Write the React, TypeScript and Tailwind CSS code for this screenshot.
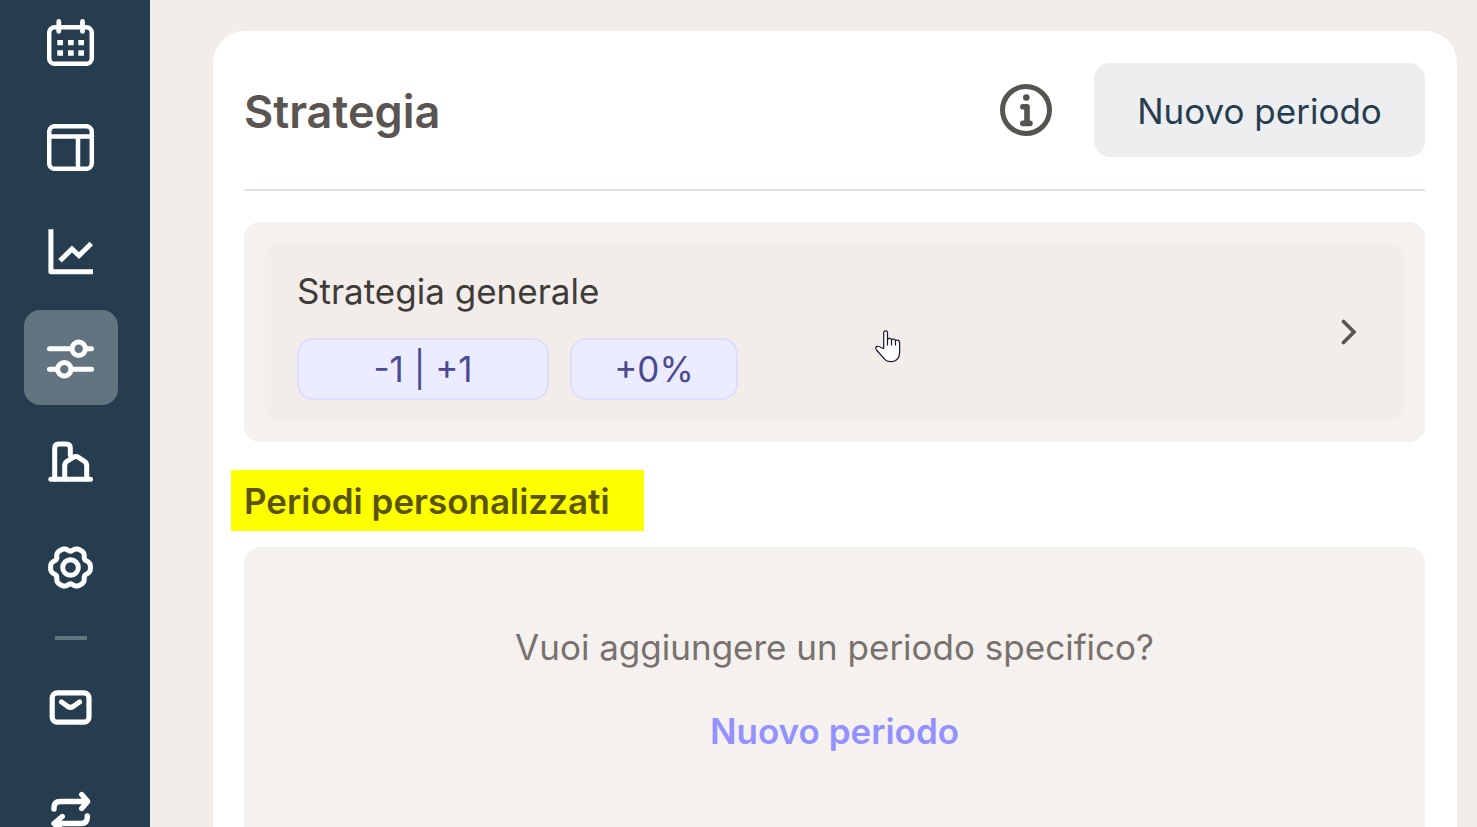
import type { ReactNode } from "react";
import clsx from "clsx";

const CENTER = 23.5;

// six-lobed outline of the settings gear
const gearPoints = Array.from({ length: 120 }, (_, i) => {
    const a = (i / 120) * Math.PI * 2;
    const r = 18.6 + 1.8 * Math.cos(6 * a) - 0.5 * Math.cos(12 * a);
    return `${(CENTER + r * Math.cos(a)).toFixed(2)},${(CENTER + r * Math.sin(a)).toFixed(2)}`;
}).join(" ");

function Icon({ children, stroke = 5 }: { children: ReactNode; stroke?: number }) {
    return (
        <svg
            viewBox="0 0 48 47"
            className="w-12 h-[47px] shrink-0"
            fill="none"
            stroke="currentColor"
            strokeWidth={stroke}
            strokeLinecap="round"
            strokeLinejoin="round"
            aria-hidden="true"
        >
            {children}
        </svg>
    );
}

const mainItems = [
    {
        label: "Calendario",
        icon: (
            <Icon stroke={4.5}>
                <rect x="2.2" y="8.2" width="42.6" height="36.6" rx="5.6" />
                <path d="M11.8 2.4v10M35.5 2.4v10" strokeWidth="4.8" />
                <path
                    d="M10.3 21h5.7v5.3h-5.7zM21 21h5.7v5.3H21zM31.3 21H37v5.3h-5.7zM10.3 31.3h5.7v5.5h-5.7zM21 31.3h5.7v5.5H21zM31.3 31.3H37v5.5h-5.7z"
                    fill="currentColor"
                    stroke="none"
                />
            </Icon>
        ),
    },
    {
        label: "Layout",
        icon: (
            <Icon stroke={4.5}>
                <rect x="2.2" y="2.2" width="42.6" height="42.6" rx="5.6" />
                <path d="M2 12.500h43M31 12.500v32" />
            </Icon>
        ),
    },
    {
        label: "Statistiche",
        icon: (
            <Icon stroke={5}>
                <path d="M3.900 0.300v42.500H46" strokeLinecap="butt" />
                <path d="M13 31.700l12-11.700 7 6.500 12.300-12" strokeLinecap="butt" strokeLinejoin="miter" />
            </Icon>
        ),
    },
    {
        label: "Strategia",
        active: true,
        icon: (
            <Icon>
                <path d="M2.500 14.700H25M38.500 14.700h6M2.500 35.300h8M24 35.300h20.500" />
                <circle cx="31.700" cy="14.700" r="6.700" />
                <circle cx="17.300" cy="35.300" r="6.700" />
            </Icon>
        ),
    },
    {
        label: "Struttura",
        icon: (
            <Icon>
                <path d="M3.800 40.300h39.700" />
                <path d="M7.700 40V8.900q0-4 4-4h7.600q4 0 4 4V16" />
                <path d="M17.700 40V26.500q0-2.500 2-4l6.500-4.200q2.600-1.500 5.200 0l6.300 4.200q2 1.500 2 4V40" />
            </Icon>
        ),
    },
    {
        label: "Impostazioni",
        icon: (
            <Icon>
                <polygon points={gearPoints} />
                <circle cx={CENTER} cy={CENTER} r="7.800" />
            </Icon>
        ),
    },
];

const secondaryItems = [
    {
        label: "Messaggi",
        icon: (
            <Icon stroke={5.2}>
                <rect x="5.200" y="8.800" width="36.800" height="29.400" rx="5" />
                <path d="M14.500 18l6.300 4.500q2.700 1.700 5.400 0L32.500 18" />
            </Icon>
        ),
    },
    {
        label: "Scambi",
        icon: (
            <Icon stroke={5.4}>
                <path d="M7 20v-1.200q0-6.300 6.300-6.300H40M34.700 5.500l6 7-6 7" />
                <path d="M40.300 27v1.200q0 6.300-6.300 6.300H7.500M15.300 27.500l-8.300 7 8.300 7" />
            </Icon>
        ),
    },
];

function NavItem({ label, icon, active }: { label: string; icon: ReactNode; active?: boolean }) {
    return (
        <a
            href="#"
            aria-label={label}
            className={clsx(
                "flex w-[94px] h-[95px] shrink-0 items-center justify-center rounded-2xl text-white",
                active && "bg-[#617480]"
            )}
        >
            {icon}
        </a>
    );
}

function Sidebar() {
    return (
        <nav className="flex w-[150px] shrink-0 flex-col gap-[10px] bg-[#263c4f] pl-6">
            {/* list is scrolled slightly, first item is cut at the top */}
            <div className="-mt-[5px] flex flex-col gap-[10px]">
                {mainItems.map((item) => (
                    <NavItem key={item.label} {...item} />
                ))}
            </div>
            <div className="mt-[11px] mb-[10px] ml-[31px] h-1 w-8 shrink-0 bg-[#617480]" />
            {secondaryItems.map((item) => (
                <NavItem key={item.label} {...item} />
            ))}
        </nav>
    );
}

function Badge({ children, className }: { children: ReactNode; className: string }) {
    return (
        <span
            className={clsx(
                "flex h-[62px] items-center justify-center rounded-2xl border-2 border-[#dddeff] bg-[#ebecff] text-[#4b4a92]",
                className
            )}
        >
            {children}
        </span>
    );
}

function HandPointer() {
    return (
        <svg viewBox="0 0 26 33" className="absolute left-[610px] top-[87px] h-[33px] w-[26px]" aria-hidden="true">
            <path
                d="M8.700 18.500V3q0-2.200 1.900-2.200T12.500 3v6.300q.5-1 2-1 1.700 0 2 1.300.7-.6 2-.5 1.500.1 2 1.400.7-.5 1.900-.3 2.200.3 2.200 2.500v9.500q0 5-3 7.500-2.200 2-5.600 2-3.800 0-6.200-2.400L1.500 20Q.2 18.300 1 17.200q.8-1 2.500-.7 1.200.2 2.700 1.200z"
                fill="#fff"
                stroke="#15152b"
                strokeWidth="1.200"
                strokeLinejoin="round"
            />
            <path d="M12.500 9v6.500M16.500 9.500v6M20.500 10.500v5" fill="none" stroke="#15152b" strokeWidth="1.200" />
        </svg>
    );
}

export default function App() {
    return (
        <div className="flex h-screen overflow-hidden bg-[#f2ede9] font-['Inter','Liberation_Sans',sans-serif] text-[35px] leading-[44px]">
            <Sidebar />
            <main className="flex min-w-0 flex-1 flex-col pl-[63px] pr-5 pt-[31px]">
                <section className="flex flex-1 flex-col rounded-t-[32px] bg-white px-8 pl-[31px] pt-8">
                    <header className="flex items-center border-b-2 border-[#e8dedb] pb-8">
                        <h1 className="flex-1 pt-1 text-[45px] font-semibold text-[#5a5452]">Strategia</h1>
                        <button type="button" aria-label="Informazioni" className="mr-[42px] text-[#55544f]">
                            <svg viewBox="0 0 52 52" className="size-[52px]" aria-hidden="true">
                                <circle cx="26" cy="26" r="23.500" fill="none" stroke="currentColor" strokeWidth="5" />
                                <circle cx="26.300" cy="13.500" r="3.300" fill="currentColor" />
                                <path
                                    d="M22.800 22.800h4.200v14.500M22.800 39.400h7.200M27 37v2"
                                    fill="none"
                                    stroke="currentColor"
                                    strokeWidth="5.600"
                                    strokeLinecap="round"
                                    strokeLinejoin="round"
                                />
                            </svg>
                        </button>
                        <button
                            type="button"
                            className="h-[94px] w-[331px] rounded-2xl bg-[#edeeef] pt-0.5 text-[#263c4f]"
                        >
                            Nuovo periodo
                        </button>
                    </header>

                    <div className="mt-[31px] rounded-2xl bg-[#f5f1ee] p-[21px]">
                        <a
                            href="#"
                            className="relative flex items-center rounded-2xl bg-[#f2ede9] pb-[21px] pl-8 pr-[47px] pt-[26px]"
                        >
                            <div className="flex-1">
                                <h2 className="text-[#3e3b39]">Strategia generale</h2>
                                <div className="mt-[25px] flex gap-[21px]">
                                    <Badge className="w-[252px]">-1 | +1</Badge>
                                    <Badge className="w-[168px]">+0%</Badge>
                                </div>
                            </div>
                            <svg viewBox="0 0 16 26" className="mb-1.5 h-[26px] w-4" aria-hidden="true">
                                <path
                                    d="M2.500 2.500L13 13 2.500 23.500"
                                    fill="none"
                                    stroke="#55544f"
                                    strokeWidth="3.600"
                                    strokeLinecap="round"
                                />
                            </svg>
                            <HandPointer />
                        </a>
                    </div>

                    <h2 className="-ml-[13px] mt-7 flex h-[61px] w-[413px] items-center bg-[#ffff00] pl-[13px] font-semibold text-[#5a5400]">
                        Periodi personalizzati
                    </h2>

                    <div className="mt-4 flex flex-1 flex-col items-center rounded-t-2xl bg-[#f5f1ee] pt-[78px]">
                        <p className="text-[#78716d]">Vuoi aggiungere un periodo specifico?</p>
                        <button type="button" className="mt-10 font-semibold text-[#9391ff]">
                            Nuovo periodo
                        </button>
                    </div>
                </section>
            </main>
        </div>
    );
}
